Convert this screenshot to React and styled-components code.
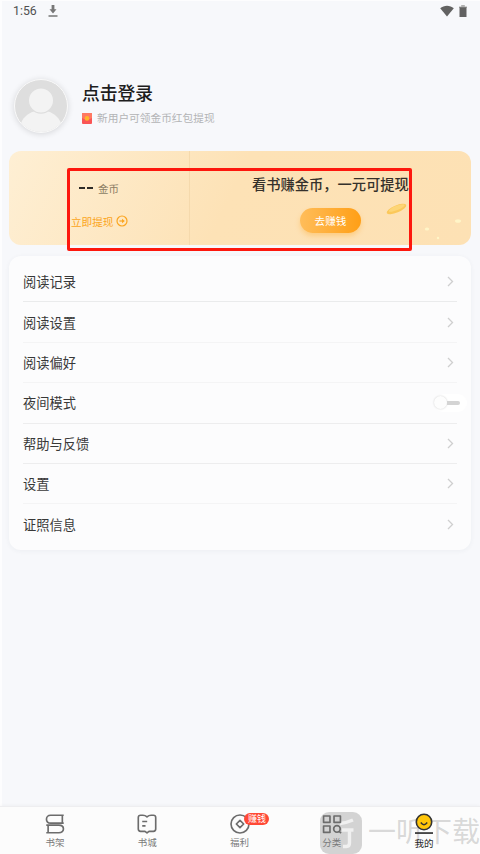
import React from "react";
import styled, { createGlobalStyle } from "styled-components";

const GlobalStyle = createGlobalStyle`
  * {
    box-sizing: border-box;
  }
  body {
    margin: 0;
    font-family: Roboto, "Noto Sans CJK SC", sans-serif;
    background: #f7f8fb;
  }
`;

const Page = styled.div`
  position: relative;
  width: 480px;
  height: 854px;
  display: flex;
  flex-direction: column;
  overflow: hidden;
  background: #f7f8fb;
  box-shadow: inset 2px 1px 0 #fdfdfe;
`;

const StatusBar = styled.header`
  height: 24px;
  display: flex;
  align-items: center;
  padding: 0 13px 2px 13px;
  font-size: 12.3px;
  font-weight: 400;
  color: #505050;
`;

const Clock = styled.span`
  width: 35px;
`;

const StatusIcons = styled.div`
  display: flex;
  align-items: center;
  gap: 5px;
  margin-left: auto;
`;

const Profile = styled.section`
  height: 127px;
  display: flex;
  align-items: flex-start;
  padding: 55px 0 0 14px;
`;

const Avatar = styled.div`
  width: 54px;
  height: 54px;
  border: 1px solid #fafafa;
  border-radius: 50%;
  overflow: hidden;
  background: #dedede;
  box-shadow: 0 1px 6px rgba(0, 0, 0, 0.14);
`;

const ProfileText = styled.div`
  padding: 2px 0 0 14px;
`;

const LoginTitle = styled.h1`
  margin: 0;
  font-size: 17.8px;
  line-height: 26px;
  font-weight: 500;
  color: #1d1d1d;
`;

const LoginHint = styled.p`
  display: flex;
  align-items: center;
  gap: 5px;
  margin: 3px 0 0;
  font-size: 10.7px;
  line-height: 18px;
  color: #b3b4b6;
  svg {
    margin-top: -2px;
  }
`;

const Banner = styled.section`
  position: relative;
  flex: none;
  height: 94px;
  margin: 0 9px;
  display: flex;
  border-radius: 12px;
  background: linear-gradient(115deg, #feefd4 0%, #fde2b6 48%, #fde1b4 100%);
`;

const Balance = styled.div`
  width: 181px;
  padding: 27px 0 0 62px;
  border-right: 1px solid #f5d9ac;
`;

const Coins = styled.div`
  display: flex;
  align-items: center;
  height: 20px;
  padding-left: 8px;
  font-size: 10.5px;
  color: #8b7d64;
`;

const Dash = styled.span`
  width: 6px;
  height: 2px;
  margin-right: 2px;
  background: #2e2b27;
  & + & {
    margin-right: 5px;
  }
`;

const Withdraw = styled.div`
  display: flex;
  align-items: center;
  gap: 3px;
  height: 18px;
  margin-top: 14px;
  font-size: 10.6px;
  color: #fba520;
`;

const Earn = styled.div`
  flex: 1;
  display: flex;
  flex-direction: column;
  align-items: center;
`;

const EarnTitle = styled.h2`
  margin: 22px 0 0;
  font-size: 14.25px;
  line-height: 24px;
  font-weight: 500;
  color: #35312b;
`;

const EarnButton = styled.button`
  width: 61px;
  height: 25px;
  margin-top: 11px;
  padding: 0;
  border: 0;
  border-radius: 13px;
  font: inherit;
  font-size: 10.6px;
  color: #fff;
  background: linear-gradient(90deg, #ffbd5a, #ff9f16);
  box-shadow: 0 3px 5px rgba(255, 166, 36, 0.35);
`;

const Sparkles = styled.svg`
  position: absolute;
  right: 0;
  bottom: 0;
`;

const Highlight = styled.div`
  position: absolute;
  left: 58px;
  top: 17px;
  width: 345px;
  height: 83px;
  border: 3px solid #fd170d;
  border-radius: 2px;
`;

const Menu = styled.ul`
  flex: none;
  height: 294px;
  margin: 11px 9px 0;
  padding: 6px 14px 0;
  list-style: none;
  border-radius: 12px;
  background: #fcfcfd;
  box-shadow: 0 1px 5px rgba(30, 50, 80, 0.05);
`;

const MenuItem = styled.li`
  display: flex;
  align-items: center;
  justify-content: space-between;
  height: 40.4px;
  padding-right: ${props => (props.$toggle ? 0 : 3)}px;
  border-bottom: ${props => (props.$line ? `1px solid ${props.$line}` : "0")};
  font-size: 13.25px;
  color: #383838;
`;

const Toggle = styled.span`
  display: flex;
  align-items: center;
  width: 33px;
  height: 18px;
  margin-right: -10px;
  border-radius: 9px;
  background: #fff;
`;

const Knob = styled.span`
  width: 13px;
  height: 13px;
  border-radius: 50%;
  background: #fdfdfd;
  box-shadow: 0 0 2px rgba(0, 0, 0, 0.2);
`;

const Track = styled.span`
  width: 13px;
  height: 4px;
  border-radius: 0 2px 2px 0;
  background: #d4d4d4;
`;

const TabBar = styled.nav`
  display: flex;
  height: 48px;
  margin-top: auto;
  padding: 0 10px 0 9px;
  border-top: 1px solid #eeeef0;
  background: #fcfcfc;
  box-shadow: 0 -1px 3px rgba(0, 0, 0, 0.03);
`;

const Tab = styled.div`
  position: relative;
  z-index: 1;
  flex: 1;
  display: flex;
  flex-direction: column;
  align-items: center;
  padding-top: 5px;
  font-size: 9.5px;
  line-height: 14px;
  color: ${props => (props.$active ? "#262626" : "#7a7a7a")};
  svg {
    display: block;
    margin: ${props => (props.$active ? "0 0 1px" : "1px 0")};
  }
`;

const Badge = styled.span`
  position: absolute;
  left: 51px;
  top: 6px;
  width: 25px;
  height: 12px;
  border-radius: 6px;
  font-size: 9px;
  line-height: 12px;
  text-align: center;
  color: #fff;
  background: #ff4936;
`;

const Watermark = styled.div`
  position: absolute;
  left: 320px;
  bottom: 0;
  display: flex;
  align-items: center;
  gap: 6px;
  width: 160px;
  height: 42px;
  font-size: 28px;
  line-height: 38px;
  white-space: nowrap;
  color: rgba(115, 115, 115, 0.27);
`;

const DownloadIcon = () => (
  <svg width="10" height="12" viewBox="0 0 10 12" fill="#777">
    <path d="M3.6 0h2.8v4.2h2.1L5 8.4 1.5 4.2h2.1zM.5 10.2h9v1.5h-9z" />
  </svg>
);

const WifiIcon = () => (
  <svg width="14" height="12" viewBox="0 0 14 12" fill="#626262">
    <path d="M.2 3.2C4-.2 10-.2 13.8 3.2L7 11.6z" />
  </svg>
);

const BatteryIcon = () => (
  <svg width="8" height="12" viewBox="0 0 8 12">
    <path d="M2.2 0h3.6v1.5H8V3H0V1.5h2.2z" fill="#b0b0b0" />
    <path d="M.5 2.3h7V12h-7z" fill="#626262" />
  </svg>
);

const PersonIcon = () => (
  <svg width="52" height="52" viewBox="0 0 52 52">
    <path
      d="M6 43c3-7 9-11 15-12h10c6 1 12 5 15 12l-7 9H13z"
      fill="#f3f3f3"
    />
    <circle
      cx="26"
      cy="20.5"
      r="12.6"
      fill="#f3f3f3"
      stroke="#dedede"
      strokeWidth="1.2"
    />
  </svg>
);

const RedPacketIcon = () => (
  <svg width="10" height="11" viewBox="0 0 10 11">
    <rect width="10" height="11" rx="1" fill="#fa5555" />
    <path d="M0 1Q0 0 1 0h8q1 0 1 1v4Q5 8 0 5z" fill="#ff7961" />
    <circle cx="5" cy="5.4" r="2.3" fill="#ffb52b" />
  </svg>
);

const ArrowCircleIcon = () => (
  <svg width="12" height="12" viewBox="0 0 12 12" fill="none" stroke="#fba520">
    <circle cx="6" cy="6" r="5" strokeWidth="1.2" />
    <path d="M3.4 6h3" strokeWidth="1.2" />
    <path d="M6 3.8L8.8 6 6 8.2z" fill="#fba520" stroke="none" />
  </svg>
);

const ChevronIcon = () => (
  <svg
    width="7"
    height="11"
    viewBox="0 0 7 11"
    fill="none"
    stroke="#cfcfcf"
    strokeWidth="1.3"
  >
    <path d="M1 1l4.5 4.5L1 10" />
  </svg>
);

const lineIcon = {
  width: 22,
  height: 22,
  viewBox: "0 0 24 24",
  fill: "none",
  stroke: "#6c6c6c",
  strokeWidth: 1.8,
  strokeLinejoin: "round"
};

const ShelfIcon = () => (
  <svg {...lineIcon}>
    <path d="M21.5 2.5H7.2C1.2 2.5 1.2 11 7.2 11H21.5M20 2.5V11M2.5 13.2h13.6c6.8 0 6.8 8.3 0 8.3H2.5M4.5 13.2v8.3" />
  </svg>
);

const StoreIcon = () => (
  <svg {...lineIcon}>
    <path d="M12 4.3Q10 2.5 7.5 2.5H5q-2.5 0-2.5 2.5v12.5Q2.5 20 5 20h4.8l2.2 1.7 2.2-1.7H19q2.5 0 2.5-2.5V5q0-2.5-2.5-2.5h-2.5Q14 2.5 12 4.3zM6.8 9.3h5.4M6.8 14h3.6" />
  </svg>
);

const WelfareIcon = () => (
  <svg {...lineIcon}>
    <circle cx="12" cy="12" r="9.8" />
    <path d="M12 8l4 4-4 4-4-4z" />
  </svg>
);

const CategoryIcon = () => (
  <svg {...lineIcon}>
    <path d="M2.8 3.3h7v7h-7zM14.2 3.3h7v7h-7zM2.8 14.2h7v7h-7z" />
    <circle cx="17.4" cy="17.4" r="3.6" />
    <path d="M19.5 19.8l2.4 2.2" />
  </svg>
);

const MineIcon = () => (
  <svg width="24" height="24" viewBox="0 0 24 24">
    <circle
      cx="12"
      cy="10"
      r="7.7"
      fill="#ffc60a"
      stroke="#333"
      strokeWidth="1.6"
    />
    <path
      d="M8.8 10.5Q12 14.8 15.2 10.5"
      fill="none"
      stroke="#333"
      strokeWidth="1.5"
    />
    <path d="M3 20.2h18v1.7H3z" fill="#333" />
  </svg>
);

const WatermarkLogo = () => (
  <svg width="42" height="42" viewBox="0 0 42 42">
    <rect width="42" height="42" rx="9" fill="#858585" fillOpacity="0.34" />
    <g fill="none" stroke="#fff" strokeOpacity="0.65" strokeWidth="3.4">
      <path d="M33 8q-7 3-13 3.5M22 18h11.5" />
      <path d="M29.5 19.5V31q0 3.5-3 3.5h-3.5" />
    </g>
  </svg>
);

const items = [
  { label: "阅读记录", line: "#eaebec" },
  { label: "阅读设置", line: "#f4f4f5" },
  { label: "阅读偏好", line: "#f4f4f5" },
  { label: "夜间模式", line: "#ededee", toggle: true },
  { label: "帮助与反馈", line: "#ededee" },
  { label: "设置", line: "#f4f4f5" },
  { label: "证照信息" }
];

const tabs = [
  { label: "书架", Icon: ShelfIcon },
  { label: "书城", Icon: StoreIcon },
  { label: "福利", Icon: WelfareIcon, badge: "赚钱" },
  { label: "分类", Icon: CategoryIcon },
  { label: "我的", Icon: MineIcon, active: true }
];

const App = () => {
  return (
    <Page>
      <GlobalStyle />
      <StatusBar>
        <Clock>1:56</Clock>
        <DownloadIcon />
        <StatusIcons>
          <WifiIcon />
          <BatteryIcon />
        </StatusIcons>
      </StatusBar>
      <Profile>
        <Avatar>
          <PersonIcon />
        </Avatar>
        <ProfileText>
          <LoginTitle>点击登录</LoginTitle>
          <LoginHint>
            <RedPacketIcon />
            新用户可领金币红包提现
          </LoginHint>
        </ProfileText>
      </Profile>
      <Banner>
        <Balance>
          <Coins>
            <Dash />
            <Dash />
            金币
          </Coins>
          <Withdraw>
            立即提现
            <ArrowCircleIcon />
          </Withdraw>
        </Balance>
        <Earn>
          <EarnTitle>看书赚金币，一元可提现</EarnTitle>
          <EarnButton>去赚钱</EarnButton>
        </Earn>
        <Sparkles width="90" height="48" viewBox="0 0 90 48">
          <g transform="rotate(-22 15.5 12)">
            <ellipse cx="15.5" cy="12" rx="10.5" ry="3.6" fill="#fbc85a" />
            <ellipse cx="16" cy="11.2" rx="8.5" ry="2.2" fill="#fdd576" />
          </g>
          <g fill="#fff5c8">
            <ellipse cx="77" cy="24" rx="3" ry="1.8" />
            <ellipse cx="46" cy="32" rx="2.2" ry="1.5" />
            <circle cx="57" cy="41" r="1.2" />
          </g>
        </Sparkles>
        <Highlight />
      </Banner>
      <Menu>
        {items.map(item => (
          <MenuItem key={item.label} $line={item.line} $toggle={item.toggle}>
            {item.label}
            {item.toggle ? (
              <Toggle>
                <Knob />
                <Track />
              </Toggle>
            ) : (
              <ChevronIcon />
            )}
          </MenuItem>
        ))}
      </Menu>
      <TabBar>
        {tabs.map(({ label, Icon, badge, active }) => (
          <Tab key={label} $active={active}>
            <Icon />
            {label}
            {badge && <Badge>{badge}</Badge>}
          </Tab>
        ))}
      </TabBar>
      <Watermark>
        <WatermarkLogo />
        一听下载
      </Watermark>
    </Page>
  );
};

export default App;
